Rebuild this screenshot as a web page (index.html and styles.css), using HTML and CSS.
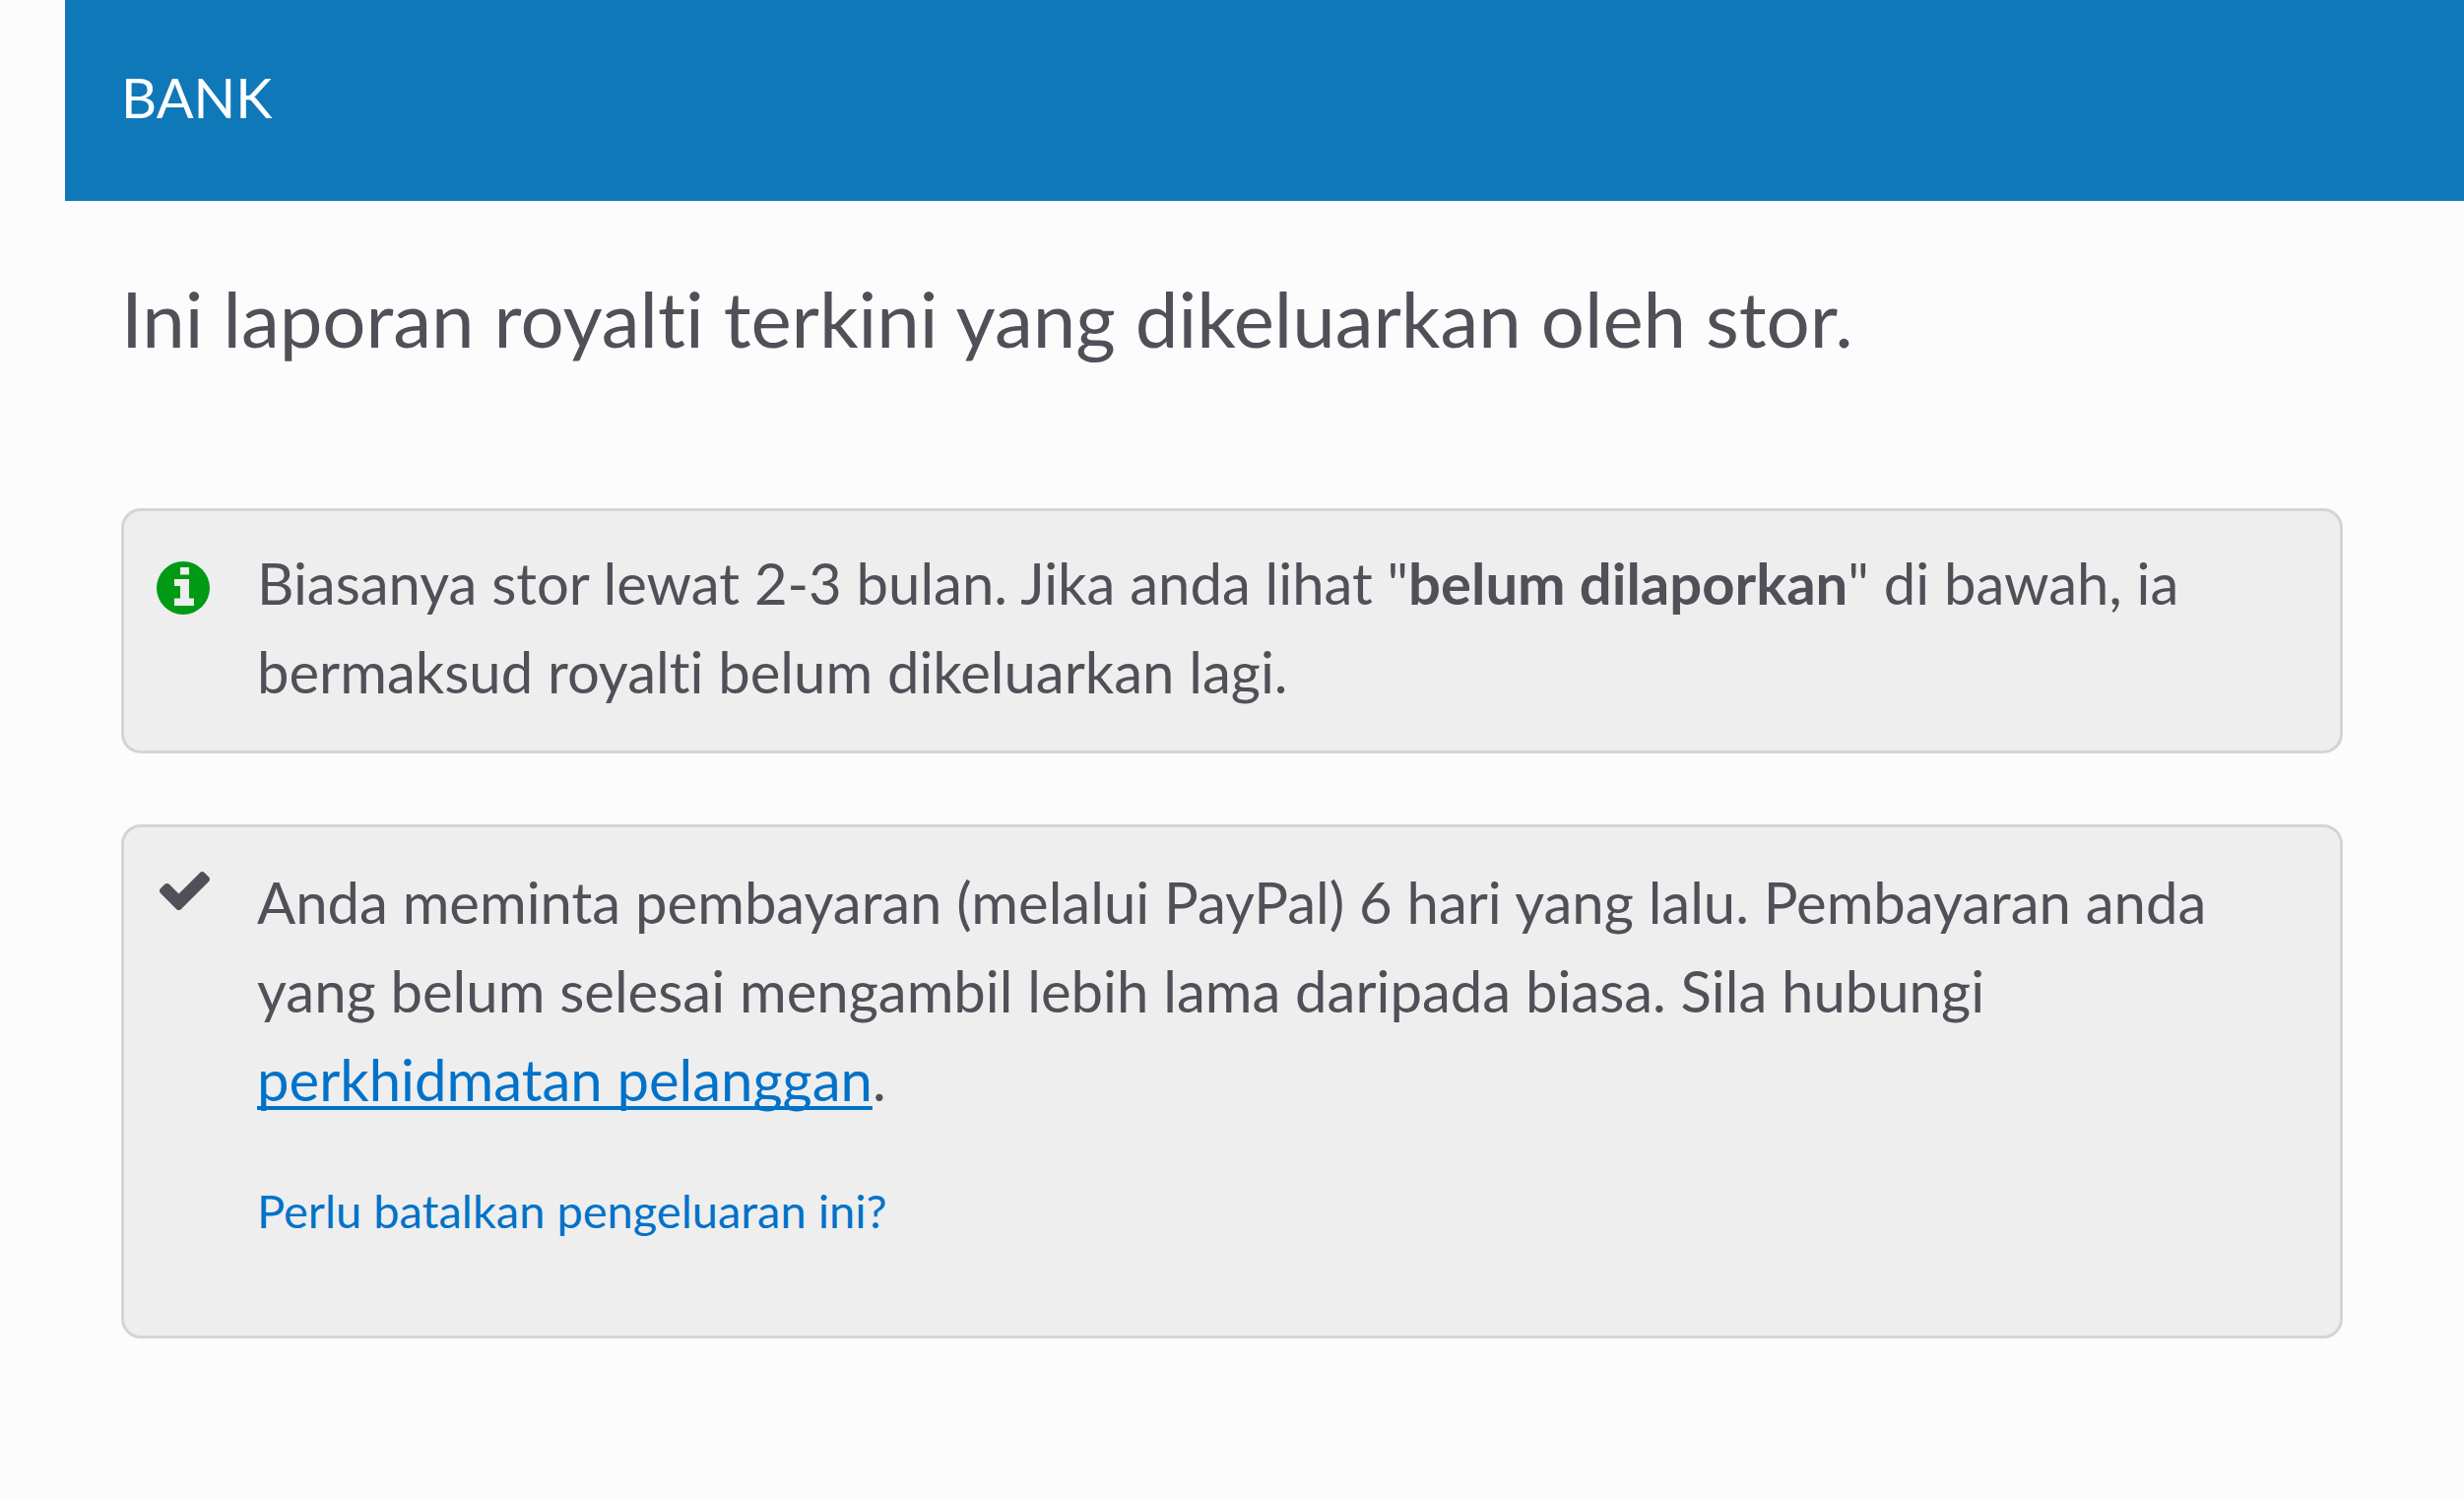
FILE: index.html
```html
<!DOCTYPE html>
<html lang="ms">
<head>
<meta charset="utf-8">
<meta name="viewport" content="width=device-width, initial-scale=1">
<title>Bank</title>
<link rel="stylesheet" href="styles.css">
</head>
<body>
<header class="banner"><h1 class="banner-title">BANK</h1></header>
<main class="content">
  <h2 class="headline">Ini laporan royalti terkini yang dikeluarkan oleh stor.</h2>
  <section class="notice">
    <svg class="icon icon-info" viewBox="0 0 54 54" aria-hidden="true"><path fill-rule="evenodd" d="M27 0a27 27 0 1 1 0 54a27 27 0 1 1 0-54zM24 6v7.500h9V6zM18 18v7h6v12.500h-6V45h20v-7.500h-5V18z"/></svg>
    <div class="notice-body">
      <p class="text">Biasanya stor lewat 2-3 bulan. Jika anda lihat "<strong>belum dilaporkan</strong>" di bawah, ia bermaksud royalti belum dikeluarkan lagi.</p>
    </div>
  </section>
  <section class="notice notice-payment">
    <svg class="icon icon-check" viewBox="32 334 1639 1188" aria-hidden="true"><path d="M1671 566q0 40-28 68l-724 724-136 136q-28 28-68 28t-68-28l-136-136-362-362q-28-28-28-68t28-68l136-136q28-28 68-28t68 28l294 295 656-657q28-28 68-28t68 28l136 136q28 28 28 68z"/></svg>
    <div class="notice-body">
      <p class="text">Anda meminta pembayaran (melalui PayPal) 6 hari yang lalu. Pembayaran anda yang belum selesai mengambil lebih lama daripada biasa. Sila hubungi <a class="support" href="#">perkhidmatan pelanggan</a>.</p>
      <a class="cancel" href="#">Perlu batalkan pengeluaran ini?</a>
    </div>
  </section>
</main>
</body>
</html>
```
FILE: styles.css
```css
* { box-sizing: border-box; }
body {
  margin: 0;
  background: #fcfcfc;
  color: #505058;
  font-family: Lato, sans-serif;
  font-variant-ligatures: none;
}
.banner {
  margin-left: 66px;
  padding: 54px 57px 60px;
  background: #0f78b9;
  color: #fff;
}
.banner-title {
  margin: 0;
  font-size: 56px;
  line-height: 90px;
  font-weight: 400;
}
.content { padding: 67px 123px 72px; }
.headline {
  margin: 0 0 141px;
  font-size: 78px;
  line-height: 104px;
  font-weight: 400;
}
.notice {
  display: flex;
  align-items: flex-start;
  padding: 28px 96px 35px 33px;
  border: 3px solid #d4d4d4;
  border-radius: 20px;
  background: #eee;
}
.notice-payment {
  margin-top: 72px;
  padding-top: 31px;
  padding-bottom: 91px;
}
.icon {
  flex: none;
  width: 54px;
  margin-right: 48px;
  fill: currentColor;
}
.icon-info { margin-top: 23px; color: #009a14; }
.icon-check { margin-top: 14px; }
.notice-body { flex: 1; }
.text {
  margin: 0;
  font-size: 58px;
  line-height: 90px;
}
a { color: #0072c9; }
.support {
  text-decoration-thickness: 4px;
  text-decoration-skip-ink: none;
  text-underline-offset: 5px;
}
.cancel {
  display: block;
  width: fit-content;
  margin-top: 52px;
  font-size: 47px;
  line-height: 72px;
  text-decoration: none;
}
```
